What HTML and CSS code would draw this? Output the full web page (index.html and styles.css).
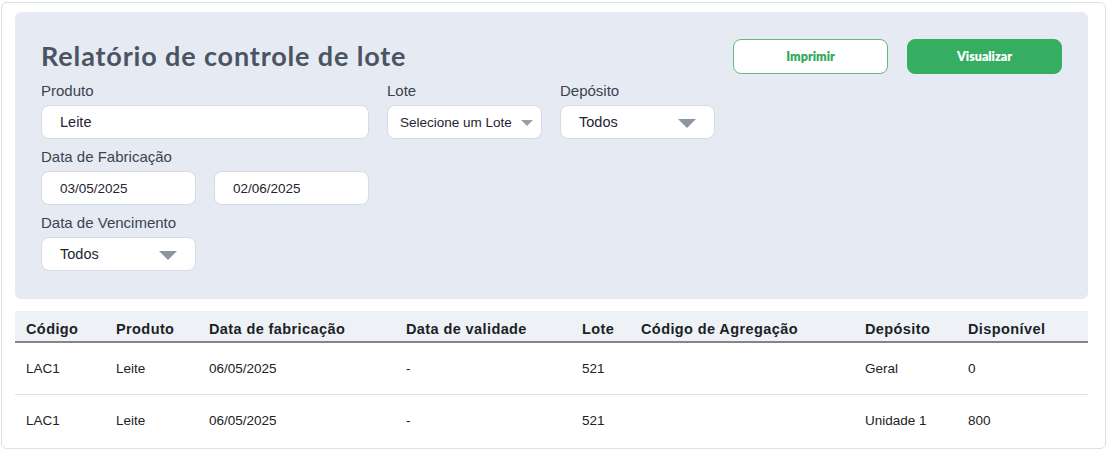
FILE: index.html
```html
<!DOCTYPE html>
<html lang="pt-BR">
<head>
<meta charset="utf-8">
<title>Relatório de controle de lote</title>
<link rel="stylesheet" href="styles.css">
</head>
<body>
<div class="card">
  <section class="filters">
    <div class="head">
      <h1 class="title">Relatório de controle de lote</h1>
      <div class="actions">
        <button class="btn btn-outline">Imprimir</button>
        <button class="btn btn-solid">Visualizar</button>
      </div>
    </div>
    <div class="grid">
      <div class="field span2">
        <label class="label">Produto</label>
        <div class="input">Leite</div>
      </div>
      <div class="field">
        <label class="label">Lote</label>
        <div class="input select small"><span>Selecione um Lote</span><span class="arrow-sm"></span></div>
      </div>
      <div class="field">
        <label class="label">Depósito</label>
        <div class="input select"><span>Todos</span><span class="arrow"></span></div>
      </div>
      <div class="field row2 span1">
        <label class="label">Data de Fabricação</label>
        <div class="input small">03/05/2025</div>
      </div>
      <div class="field row2">
        <label class="label">&nbsp;</label>
        <div class="input small">02/06/2025</div>
      </div>
      <div class="field row3">
        <label class="label">Data de Vencimento</label>
        <div class="input select"><span>Todos</span><span class="arrow"></span></div>
      </div>
    </div>
  </section>
  <table class="tbl">
    <colgroup>
      <col style="width:90px"><col style="width:93px"><col style="width:197px"><col style="width:176px"><col style="width:59px"><col style="width:224px"><col style="width:103px"><col>
    </colgroup>
    <thead>
      <tr><th>Código</th><th>Produto</th><th>Data de fabricação</th><th>Data de validade</th><th>Lote</th><th>Código de Agregação</th><th>Depósito</th><th>Disponível</th></tr>
    </thead>
    <tbody>
      <tr><td>LAC1</td><td>Leite</td><td>06/05/2025</td><td>-</td><td>521</td><td></td><td>Geral</td><td>0</td></tr>
      <tr><td>LAC1</td><td>Leite</td><td>06/05/2025</td><td>-</td><td>521</td><td></td><td>Unidade 1</td><td>800</td></tr>
    </tbody>
  </table>
</div>
</body>
</html>
```
FILE: styles.css
```css
* { box-sizing: border-box; }
html, body { margin: 0; padding: 0; background: #ffffff; }
body { font-family: "Liberation Sans", Arial, sans-serif; color: #222; }

.card {
  margin: 2px 1px 0 1px;
  width: 1105px;
  height: 447px;
  border: 1px solid #dcdfe4;
  border-radius: 6px;
  padding: 9px 17px 0 13px;
}

.filters {
  background: #e6ebf3;
  border-radius: 6px;
  height: 287px;
  padding: 0 26px 0 26px;
}

.head {
  display: flex;
  justify-content: space-between;
  align-items: flex-start;
  height: 70px;
}
.title {
  margin: 28px 0 0 0;
  font-family: "Lato", "Liberation Sans", sans-serif;
  font-weight: 700;
  font-size: 27px;
  line-height: 32px;
  color: #4a5462;
  letter-spacing: 0.85px;
}
.actions {
  display: flex;
  gap: 19px;
  margin-top: 27px;
}
.btn {
  width: 155px;
  height: 35px;
  border-radius: 8px;
  font-family: "Lato", "Liberation Sans", sans-serif;
  font-weight: 800;
  font-size: 12.5px;
  cursor: pointer;
}
.btn-outline {
  background: #fff;
  border: 1px solid #5bbd7c;
  color: #2fa95c;
}
.btn-solid {
  background: #35ae62;
  border: 1px solid #35ae62;
  color: #fff;
}

.grid {
  display: grid;
  grid-template-columns: 155px 155px 155px 155px;
  column-gap: 18px;
  row-gap: 9px;
}
.span2 { grid-column: span 2; }
.row2 { grid-row: 2; }
.row3 { grid-row: 3; grid-column: 1; }

.field { display: flex; flex-direction: column; }
.label {
  font-size: 15px;
  line-height: 18px;
  color: #3b4350;
  margin-bottom: 5px;
}
.input {
  height: 34px;
  background: #fff;
  border: 1px solid #d5dbe4;
  border-radius: 8px;
  padding: 0 18px;
  display: flex;
  align-items: center;
  font-size: 14.5px;
  color: #1f2430;
}
.input.small { font-size: 13.5px; }
.select { justify-content: space-between; padding-right: 18px; }
.select.small { padding: 0 8px 0 12px; }
.arrow {
  width: 0; height: 0;
  border-left: 9px solid transparent;
  border-right: 9px solid transparent;
  border-top: 9px solid #8d95a3;
  margin-top: 3px;
}
.arrow-sm {
  width: 0; height: 0;
  border-left: 6px solid transparent;
  border-right: 6px solid transparent;
  border-top: 6px solid #9aa0aa;
  margin-top: 2px;
}

.tbl {
  margin-top: 12px;
  width: 1073px;
  border-collapse: collapse;
  table-layout: fixed;
  font-size: 13.5px;
}
.tbl th {
  background: #eef2f7;
  text-align: left;
  font-weight: 700;
  font-size: 14.5px;
  color: #1c1f26;
  height: 31px;
  padding: 5px 0 0 11px;
  border-bottom: 2px solid #858585;
  letter-spacing: 0.4px;
}
.tbl td {
  height: 52px;
  padding: 0 0 0 11px;
  color: #222;
  border-bottom: 1px solid #dde1e7;
}
.tbl tbody tr:last-child td { border-bottom: none; }
```
